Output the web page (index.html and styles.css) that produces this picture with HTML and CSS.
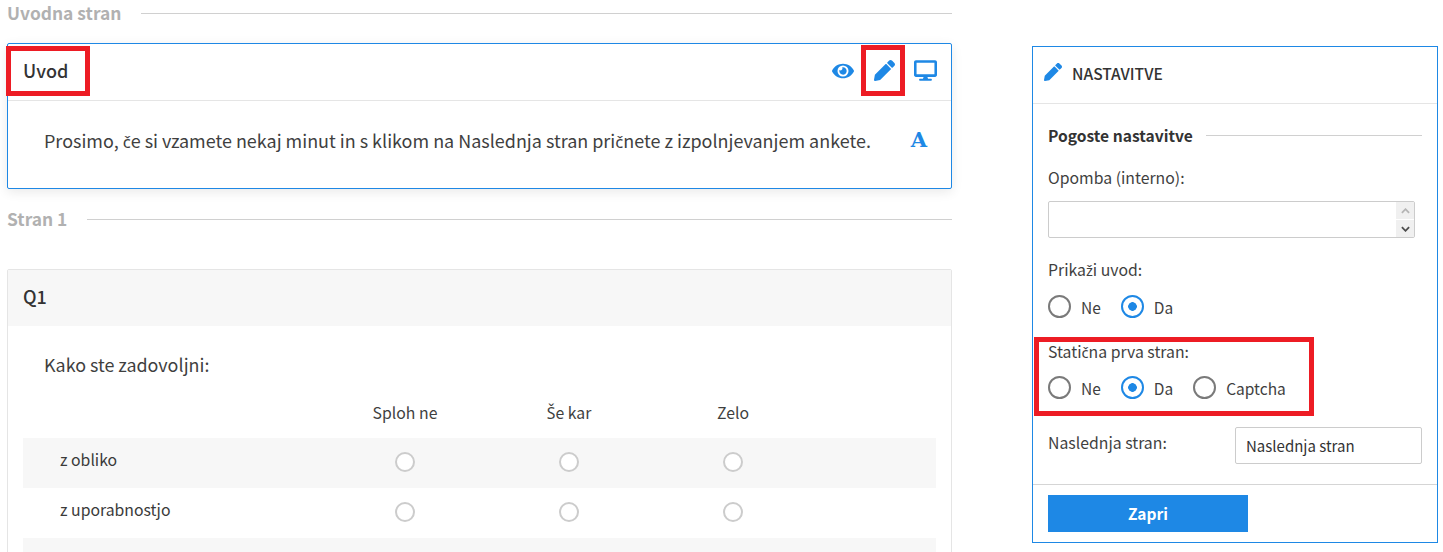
FILE: index.html
```html
<!DOCTYPE html>
<html lang="sl">
<head>
<meta charset="utf-8">
<title>Uvodna stran</title>
<link rel="stylesheet" href="styles.css">
</head>
<body>
<div class="page">
  <main class="main">
    <div class="sec sec-first"><span class="sec-title">Uvodna stran</span><span class="sec-line"></span></div>
    <section class="card card-active">
      <header class="card-head">
        <h2 class="card-title">Uvod</h2>
        <div class="tools">
          <svg class="ic ic-eye" viewBox="0 0 576 512"><path d="M572.52 241.4C518.29 135.59 410.93 64 288 64S57.68 135.64 3.48 241.41a32.35 32.35 0 0 0 0 29.19C57.71 376.41 165.07 448 288 448s230.32-71.64 284.52-177.41a32.35 32.35 0 0 0 0-29.19zM288 400a144 144 0 1 1 144-144 143.93 143.93 0 0 1-144 144zm0-240a95.31 95.31 0 0 0-25.31 3.79 47.85 47.85 0 0 1-66.9 66.9A95.78 95.78 0 1 0 288 160z"/></svg>
          <svg class="ic ic-pen" viewBox="0 0 512 512"><path d="M497.9 142.1l-46.1 46.1c-4.7 4.7-12.3 4.7-17 0l-111-111c-4.7-4.7-4.7-12.3 0-17l46.1-46.1c18.7-18.7 49.1-18.7 67.9 0l60.1 60.1c18.8 18.7 18.8 49.1 0 67.9zM284.2 99.8L21.6 362.4.4 483.9c-2.9 16.4 11.4 30.6 27.8 27.8l121.5-21.3 262.6-262.6c4.7-4.7 4.7-12.3 0-17l-111-111c-4.8-4.7-12.4-4.7-17.1 0z"/></svg>
          <svg class="ic ic-desk" viewBox="0 0 576 512"><path d="M528 0H48C21.5 0 0 21.5 0 48v320c0 26.5 21.5 48 48 48h192l-16 48h-72c-13.3 0-24 10.7-24 24s10.7 24 24 24h272c13.3 0 24-10.7 24-24s-10.7-24-24-24h-72l-16-48h192c26.5 0 48-21.5 48-48V48c0-26.5-21.5-48-48-48zm-16 352H64V64h448v288z"/></svg>
        </div>
      </header>
      <div class="intro">
        <p class="intro-text">Prosimo, <span class="dia">č</span>e si vzamete nekaj minut in s klikom na Naslednja stran pri<span class="dia">č</span>nete z izpolnjevanjem ankete.</p>
        <span class="lang-a">A</span>
      </div>
    </section>
    <div class="sec sec-second"><span class="sec-title">Stran 1</span><span class="sec-line"></span></div>
    <section class="card card-q">
      <header class="q-head"><h2 class="card-title">Q1</h2></header>
      <div class="q-body">
        <p class="q-text">Kako ste zadovoljni:</p>
        <div class="grid-row grid-head"><span></span><span>Sploh ne</span><span><span class="dia dia-cap">Š</span>e kar</span><span>Zelo</span><span></span></div>
        <div class="grid-row row-alt"><span class="row-label">z obliko</span><span><i class="r"></i></span><span><i class="r"></i></span><span><i class="r"></i></span><span></span></div>
        <div class="grid-row"><span class="row-label">z uporabnostjo</span><span><i class="r"></i></span><span><i class="r"></i></span><span><i class="r"></i></span><span></span></div>
        <div class="grid-row row-alt"><span class="row-label"></span><span></span><span></span><span></span><span></span></div>
      </div>
    </section>
  </main>
  <aside class="panel">
    <header class="panel-head">
      <svg class="ic-panel" viewBox="0 0 512 512"><path d="M497.9 142.1l-46.1 46.1c-4.7 4.7-12.3 4.7-17 0l-111-111c-4.7-4.7-4.7-12.3 0-17l46.1-46.1c18.7-18.7 49.1-18.7 67.9 0l60.1 60.1c18.8 18.7 18.8 49.1 0 67.9zM284.2 99.8L21.6 362.4.4 483.9c-2.9 16.4 11.4 30.6 27.8 27.8l121.5-21.3 262.6-262.6c4.7-4.7 4.7-12.3 0-17l-111-111c-4.8-4.7-12.4-4.7-17.1 0z"/></svg>
      <span class="panel-title">NASTAVITVE</span>
    </header>
    <div class="panel-body">
      <div class="sub"><span class="sub-title">Pogoste nastavitve</span><span class="sec-line"></span></div>
      <div class="lbl lbl-note">Opomba (interno):</div>
      <div class="note">
        <div class="spin">
          <span class="spin-btn"><svg viewBox="0 0 10 6"><path d="M1 5l4-4 4 4" class="chev chev-off"/></svg></span>
          <span class="spin-btn"><svg viewBox="0 0 10 6"><path d="M1 1l4 4 4-4" class="chev"/></svg></span>
        </div>
      </div>
      <div class="lbl lbl-intro">Prika<span class="dia">ž</span>i uvod:</div>
      <div class="radios radios-intro">
        <span class="opt"><i class="rb"></i>Ne</span>
        <span class="opt"><i class="rb rb-on"></i>Da</span>
      </div>
      <div class="lbl lbl-static">Stati<span class="dia">č</span>na prva stran:</div>
      <div class="radios radios-static">
        <span class="opt"><i class="rb"></i>Ne</span>
        <span class="opt"><i class="rb rb-on"></i>Da</span>
        <span class="opt"><i class="rb"></i>Captcha</span>
      </div>
      <div class="next">
        <span class="lbl">Naslednja stran:</span>
        <span class="next-input">Naslednja stran</span>
      </div>
    </div>
    <footer class="panel-foot"><button class="btn">Zapri</button></footer>
  </aside>
</div>
<div class="mark mark-uvod"></div>
<div class="mark mark-pen"></div>
<div class="mark mark-static"></div>
</body>
</html>
```

FILE: styles.css
```css
* { box-sizing: border-box; }
html, body { margin: 0; padding: 0; height: 552px; overflow: hidden; background: #fff; }
body {
  position: relative;
  font-family: "Noto Sans CJK SC", "Noto Sans", sans-serif;
  font-size: 15.8px;
  line-height: 20px;
  color: #3a3a3a;
}
.dia { font-family: "Noto Sans", sans-serif; font-size: .93em; line-height: 1; }
.dia-cap { font-size: 1em; }
.page { display: flex; align-items: flex-start; padding-left: 7px; }
.main { width: 945px; flex: none; }

.sec { display: flex; align-items: center; gap: 20px; height: 20px; }
.sec-first { margin-top: 3px; }
.sec-second { margin-top: 20px; }
.sec-title { font-weight: 700; font-size: 17.4px; color: #b1b1b1; white-space: nowrap; }
.sec-line { flex: 1; height: 1px; background: #d0d0d0; }

.card { background: #fff; border-radius: 2px; }
.card-active { margin-top: 20px; height: 146px; border: 1px solid #1e88e5; box-shadow: 0 3px 12px rgba(0,0,0,.09); }
.card-head { display: flex; justify-content: space-between; align-items: center; height: 57px; padding: 0 14px 4px 15px; border-bottom: 1px solid #e5e5e5; }
.card-title { margin: 0; font-size: 18px; font-weight: 500; color: #333; }
.tools { display: flex; align-items: center; gap: 19px; height: 24px; margin-top: 1px; }
.ic { fill: #1e88e5; display: block; }
.ic-eye { width: 22px; height: 20px; margin-right: 1px; }
.ic-pen { width: 21px; height: 21px; }
.ic-desk { width: 23px; height: 21px; }

.intro { display: flex; justify-content: space-between; align-items: center; height: 80px; padding: 0 24px 2px 36px; }
.intro-text { margin: 0; font-size: 17.97px; color: #3f3f3f; white-space: nowrap; }
.lang-a { font-family: "DejaVu Serif", serif; font-weight: 700; font-size: 21px; color: #1e88e5; }

.card-q { margin-top: 40px; height: 320px; border: 1px solid #e5e5e5; }
.q-head { height: 56px; background: #f7f7f7; display: flex; align-items: center; padding: 0 0 4px 15px; }
.q-body { padding: 0 15px; }
.q-text { margin: 0; padding: 28px 0 0 21px; font-size: 17.9px; line-height: 20px; color: #3f3f3f; height: 67px; }
.grid-row { display: grid; grid-template-columns: 300px 164px 164px 164px 1fr; align-items: center; height: 50px; text-align: center; }
.grid-head { height: 20px; margin: 10px 0 15px; color: #3f3f3f; }
.row-alt { background: #f7f7f7; }
.row-label { text-align: left; padding-left: 37px; margin-top: -6px; }
.r { display: block; width: 20px; height: 20px; margin: 0 auto 2px; border: 2px solid #ccc; border-radius: 50%; background: #fff; }

.panel { flex: none; width: 406px; height: 497px; margin: 46px 0 0 80px; border: 1px solid #1e88e5; background: #fff; }
.panel-head { display: flex; align-items: center; gap: 10px; height: 57px; padding: 0 0 4px 11px; border-bottom: 1px solid #e5e5e5; }
.ic-panel { width: 18px; height: 18px; fill: #1e88e5; margin-top: -2px; }
.panel-title { font-size: 15.6px; font-weight: 500; color: #333; }
.panel-body { padding: 21px 15px 0; height: 380px; }
.sub { display: flex; align-items: center; gap: 13px; height: 20px; }
.sub-title { font-weight: 700; font-size: 15.6px; color: #333; white-space: nowrap; }
.lbl { color: #3f3f3f; }
.lbl-note { margin-top: 23px; }
.note { position: relative; height: 37px; margin-top: 13px; width: 367px; border: 1px solid #ccc; border-radius: 2px; }
.spin { position: absolute; top: 0; right: 0; bottom: 0; width: 18px; display: flex; flex-direction: column; gap: 1px; background: #fff; }
.spin-btn { flex: 1; background: #f0f0f0; display: flex; align-items: center; justify-content: center; }
.spin-btn svg { width: 9px; height: 6px; }
.chev { fill: none; stroke: #4d4d4d; stroke-width: 2; }
.chev-off { stroke: #b5b5b5; }
.lbl-intro { margin-top: 22px; }
.radios { display: flex; align-items: center; height: 24px; gap: 20px; }
.radios-intro { margin-top: 14px; }
.lbl-static { margin-top: 24px; }
.radios-static { margin-top: 13px; }
.opt { display: flex; align-items: center; gap: 10px; padding-top: 2px; font-size: 15.5px; color: #3f3f3f; }
.rb { display: block; flex: none; width: 23px; height: 23px; margin-top: -2px; border: 2px solid #7a7a7a; border-radius: 50%; background: #fff; }
.rb-on { border-color: #1e88e5; background: radial-gradient(circle, #1e88e5 0 4px, #fff 4.6px); }
.next { display: flex; align-items: flex-start; justify-content: space-between; margin-top: 28px; }
.next .lbl { margin-top: 6px; }
.next-input { width: 187px; height: 37px; padding: 0 10px; border: 1px solid #ccc; border-radius: 2px; line-height: 35px; font-size: 15px; color: #333; }
.panel-foot { height: 58px; border-top: 1px solid #d5d5d5; padding: 10px 15px 0; }
.btn { display: block; width: 200px; height: 37px; padding: 0; border: 0; background: #1e88e5; color: #fff; font: 700 15.5px/37px "Noto Sans CJK SC", "Noto Sans", sans-serif; }

.mark { position: absolute; border: 5px solid #ed1c24; }
.mark-uvod { left: 6px; top: 46px; width: 84px; height: 50px; }
.mark-pen { left: 861px; top: 45px; width: 44px; height: 51px; }
.mark-static { left: 1034px; top: 337px; width: 280px; height: 79px; }
```
